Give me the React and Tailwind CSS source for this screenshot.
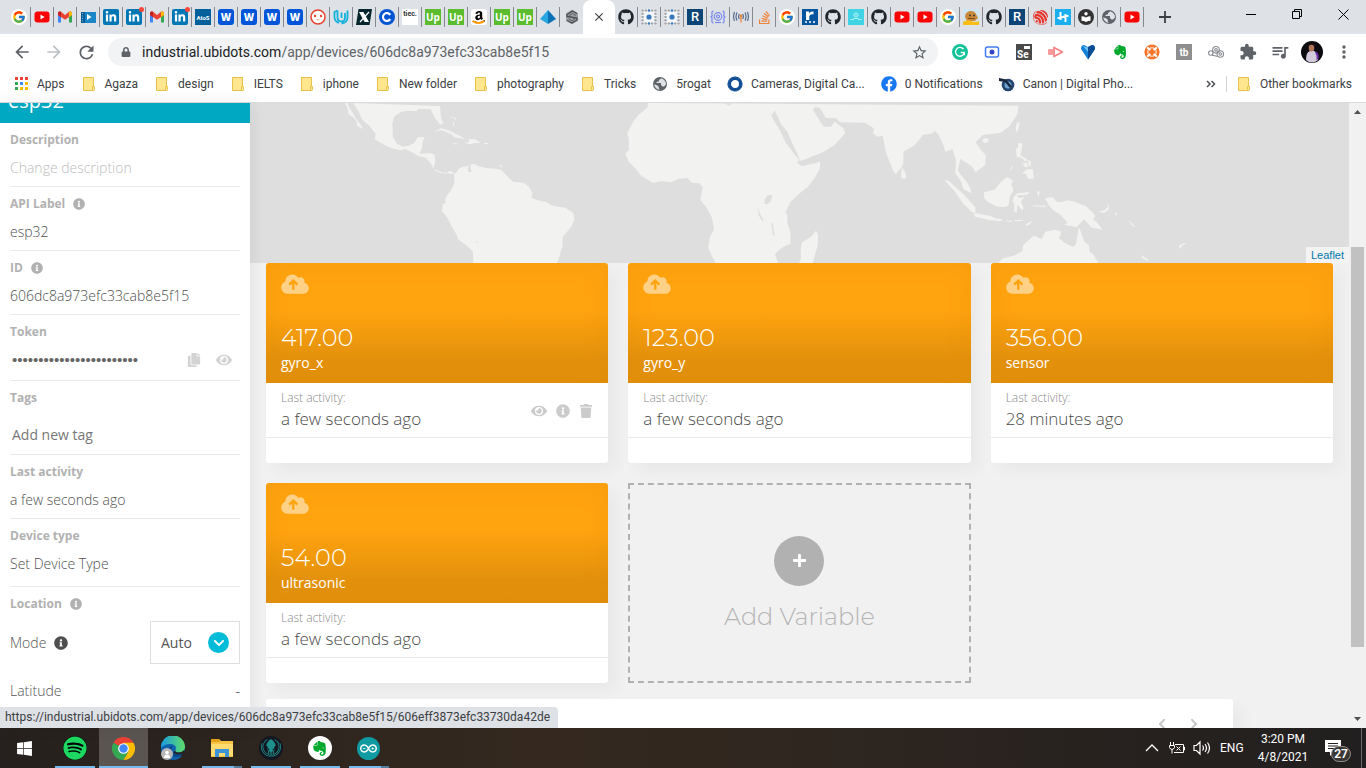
import React from "react";
import {
  FaInfoCircle, FaEye, FaCopy, FaTrash, FaPlus, FaChevronDown, FaChevronLeft, FaChevronRight,
  FaLinkedinIn, FaGithub, FaStackOverflow, FaAmazon, FaSpotify, FaFacebook, FaEvernote, FaLock,
  FaWindows,
} from "react-icons/fa";
import { FcGoogle } from "react-icons/fc";
import { SiEspressif, SiArduino, SiGitkraken } from "react-icons/si";
import { MdArrowBack, MdArrowForward, MdRefresh, MdStarBorder, MdQueueMusic, MdMoreVert, MdClose, MdExtension } from "react-icons/md";

/* ---------- tab icons ---------- */

const Google = () => (
  <span className="flex size-4 items-center justify-center rounded-full bg-white"><FcGoogle size={14} /></span>
);
const YouTube = () => (
  <svg viewBox="0 0 16 16" className="size-4">
    <rect x="0.5" y="2.5" width="15" height="11" rx="3" fill="#f00" />
    <path d="M6.5 5.6v4.8L10.6 8z" fill="#fff" />
  </svg>
);
const Gmail = () => (
  <svg viewBox="0 0 16 16" className="size-4">
    <path d="M1 4v9.5h3V7z" fill="#4285f4" />
    <path d="M15 4v9.5h-3V7z" fill="#34a853" />
    <path d="M1 4.2C1 2.5 3 2 4 2.8L8 6l4-3.200c1-.8 3-.3 3 1.400V6L8 10.800 1 6z" fill="#ea4335" />
    <path d="M12 2.800c1.200-.8 3-.2 3 1.500V6l-3 2.200z" fill="#fbbc04" />
    <path d="M1 4.200V6l3 2.200V2.800C2.800 2 1 2.600 1 4.200z" fill="#c5221f" />
  </svg>
);
const Video = () => (
  <svg viewBox="0 0 16 16" className="size-4">
    <rect x="1" y="3" width="15" height="11" fill="#1a86c7" />
    <path d="M1 3h4v11H1z" fill="#0b5a94" />
    <path d="M2 4.500h1.200M2 7h1.200M2 9.500h1.200M2 12h1.200" stroke="#7cc2ea" />
    <path d="M7 5v6l4.500-3z" fill="#fff" />
  </svg>
);
const LinkedIn = ({ dot }) => (
  <span className="relative flex size-4 items-center justify-center rounded-xs bg-[#0077b5] text-white">
    <FaLinkedinIn size={12} />
    {dot && <span className="absolute -top-0.5 -right-0.5 size-[5px] rounded-full bg-[#f5483b]" />}
  </span>
);
const Atos = () => (
  <span className="flex size-4 items-center justify-center bg-[#00609c] text-[6px] font-bold text-white">AtoS</span>
);
const Wuzzuf = () => (
  <span className="flex size-4 items-center justify-center rounded-[3px] bg-[#0055d9] font-['Open_Sans',sans-serif] text-[10px] font-extrabold text-white">W</span>
);
const Face = () => (
  <svg viewBox="0 0 16 16" className="size-4">
    <circle cx="8" cy="8" r="7" fill="#fff" stroke="#e8432d" strokeWidth="1.500" />
    <circle cx="5" cy="7" r="1.200" fill="#e8432d" /><circle cx="11" cy="7" r="1.200" fill="#e8432d" />
    <path d="M6.500 10.500q1.500 1 3 0" stroke="#f3a79c" fill="none" />
  </svg>
);
const Udacity = () => (
  <svg viewBox="0 0 16 16" className="size-4" fill="none" stroke="#12b2dd" strokeWidth="1.800">
    <path d="M4.500 1.500 1.500 3v5q0 4.500 4.500 6" />
    <path d="M4.500 1.500v7q0 4 4.500 4 3-.5 3-4V4" />
    <path d="M8.500 3.500V9M14.500 1.500v7q0 5-6 6" />
  </svg>
);
const XMark = () => (
  <svg viewBox="0 0 16 16" className="size-4">
    <path d="M2.500 0H16l-2.500 16H0z" fill="#06262d" />
    <path d="M4 3.500h3l5 9H9zM13 3 4 13" fill="#fff" stroke="#fff" strokeWidth="1.200" />
  </svg>
);
const Coursera = () => (
  <svg viewBox="0 0 16 16" className="size-4">
    <circle cx="8" cy="8" r="8" fill="#0056d2" />
    <path d="M11.300 5.800a4 4 0 1 0 0 4.400" stroke="#fff" strokeWidth="2.200" fill="none" />
  </svg>
);
const Tiec = () => (
  <span className="flex size-4 items-start justify-center bg-white pt-0.5 text-[7px] leading-[7px] font-bold text-[#333]">tiec.</span>
);
const Upwork = () => (
  <span className="flex size-4 items-center justify-center bg-[#5bbc2e] font-['Open_Sans',sans-serif] text-[10px] leading-3 font-bold text-white">Up</span>
);
const Amazon = () => (
  <span className="relative flex size-4 items-center justify-center rounded-[3px] bg-white text-black">
    <FaAmazon size={14} />
    <svg viewBox="0 0 16 16" className="absolute inset-0 size-4"><path d="M1.500 12q6 4 12 0" fill="none" stroke="#f90" strokeWidth="2" /></svg>
  </span>
);
const Pyramid = () => (
  <svg viewBox="0 0 16 16" className="size-4">
    <path d="M8 1 0 10l8 5z" fill="#29a7e0" /><path d="M8 1l8 9-8 5z" fill="#0c72b5" />
  </svg>
);
const Cubes = () => (
  <svg viewBox="0 0 16 16" className="size-4">
    <path d="M8 .8l6 3.500v7.400L8 15.200l-6-3.500V4.300z" fill="#9b9ea1" />
    <path d="M13 4.500 8.500 2 3 5.500v2L13 9v2l-5 3-5-2.500" fill="none" stroke="#4a4d50" strokeWidth="1.300" />
    <path d="M12 6.500 8.500 4.500 5 6.500l6 3.500-3 1.800-3.500-2" fill="none" stroke="#5b5e61" strokeWidth=".9" />
  </svg>
);
const GitHub = () => <FaGithub size={16} color="#20262c" />;
const grid = [1.500, 4.800, 8, 11.200, 14.500];
const Dots = () => (
  <svg viewBox="0 0 16 16" className="size-4">
    <rect width="16" height="16" fill="#f4f5f7" />
    {grid.map((x) => grid.map((y) => (x === 1.500 || x === 14.500 || y === 1.500 || y === 14.500) && (
      <circle key={`${x}-${y}`} cx={x} cy={y} r="1.300" fill={x === 8 ? "#3779bd" : "#a5a8ac"} />
    )))}
    <circle cx="8" cy="8" r="2.600" fill="#3779bd" />
  </svg>
);
const RBox = () => (
  <span className="flex size-4 items-center justify-center bg-[#0d4577] text-[13px] font-medium text-white">R</span>
);
const Json = () => (
  <svg viewBox="0 0 16 16" className="size-4" fill="none" stroke="#7486ec" strokeWidth="1.200">
    <path d="M3.500 2Q1.500 2 2 5t-1.500 3Q2.500 8 2 11t1.500 3M12.500 2q2 0 1.500 3t1.500 3Q13.500 8 14 11t-1.500 3" />
    <circle cx="8" cy="7.500" r="3.800" /><circle cx="8" cy="7.500" r="1.500" /><path d="M5 13.500h6" />
  </svg>
);
const Antenna = () => (
  <svg viewBox="0 0 16 16" className="size-4" fill="none" stroke="#4a6189" strokeWidth="1.100">
    <path d="M1.500 3q-1.800 4.500 0 9M4 3.500q-2 4 0 8M14.500 3q1.800 4.500 0 9M12 3.500q2 4 0 8M6.300 5q-1.300 2.500 0 5M9.700 5q1.300 2.500 0 5" />
    <path d="M8 8v5.500" stroke="#e7a06a" strokeWidth="1.800" /><circle cx="8" cy="7" r="1.400" fill="#e7832e" stroke="none" />
  </svg>
);
const Stack = () => <FaStackOverflow size={15} color="#ef8236" />;
const RDots = () => (
  <svg viewBox="0 0 16 16" className="size-4">
    <rect width="16" height="16" fill="#00559e" />
    <path d="M4 2.500h3v1.500q1.500-2 4.500-1.500v2.800q-3.500-.5-4.200 1.700V11H4z" fill="#fff" />
    <path d="M3 13h2M7 13h2M11 13h2" stroke="#fff" strokeWidth="1.500" />
  </svg>
);
const Cyan = () => (
  <svg viewBox="0 0 16 16" className="size-4">
    <rect width="16" height="16" fill="#3fd3e3" />
    <circle cx="8" cy="6" r="2.200" fill="#6fe0eb" stroke="#9deef5" /><path d="M2 10.500h4M10 10.500h4M5 9.500h6" stroke="#9deef5" />
  </svg>
);
const Dog = () => (
  <svg viewBox="0 0 16 16" className="size-4">
    <rect width="16" height="16" fill="#cfe6f2" />
    <path d="M2 8q0-5 5-6 5-.5 6.500 4L15 9l-3 3H4z" fill="#c98a3c" />
    <path d="M0 16v-3q4-3 8-1t8 0v4z" fill="#fbbc14" />
    <circle cx="7" cy="6.500" r=".9" fill="#333" /><circle cx="11" cy="6.500" r=".9" fill="#333" />
    <path d="M5 9.500h7" stroke="#7a4c17" />
  </svg>
);
const Espressif = () => <SiEspressif size={15} color="#e8362d" />;
const Hackster = () => (
  <svg viewBox="0 0 16 16" className="size-4">
    <rect width="16" height="16" fill="#1baff0" />
    <path d="M5.500 3v8M10.500 5v8M2.500 9h3l5-2h3" stroke="#fff" strokeWidth="1.900" fill="none" />
  </svg>
);
const Reader = () => (
  <svg viewBox="0 0 16 16" className="size-4">
    <circle cx="8" cy="8" r="8" fill="#333" />
    <circle cx="8" cy="4.800" r="1.700" fill="#fff" />
    <path d="M3.500 7.200Q6 7.200 8 8.500q2-1.300 4.500-1.300v4.500Q10 11.700 8 13q-2-1.300-4.500-1.300z" fill="#fff" />
  </svg>
);
const Globe = () => (
  <svg viewBox="0 0 16 16" className="size-4">
    <circle cx="8" cy="8" r="7" fill="#5f6368" />
    <path d="M9.500 2.300 7 4v1.500H5.500L4 7h5v2l1.500 1.500H12L14 8.500q.3-4-4.500-6.200zM2 8.200l3.500 1.300L6.800 11v1.500l1 1.300Q3.500 13.500 2 8.200z" fill="#dee1e6" />
  </svg>
);

const leftTabs = [
  Google, YouTube, Gmail, Video, LinkedIn, () => <LinkedIn dot />, Gmail, () => <LinkedIn dot />, Atos, Wuzzuf, Wuzzuf,
  Wuzzuf, Wuzzuf, Face, Udacity, XMark, Coursera, Tiec, Upwork, Upwork, Amazon, Upwork, Upwork, Pyramid, Cubes,
];
const rightTabs = [
  GitHub, Dots, Dots, RBox, Json, Antenna, Stack, Google, RDots, GitHub, Cyan, GitHub, YouTube, YouTube, Google, Dog,
  GitHub, RBox, Espressif, Hackster, Reader, Globe, YouTube,
];

function Tab({ icon: Icon, last }) {
  return (
    <button
      aria-label="Tab"
      className={"flex h-5 w-[23px] shrink-0 items-center justify-center " + (last ? "" : "border-r border-[#85888d]")}
    >
      <Icon />
    </button>
  );
}

function TabStrip() {
  return (
    <div className="flex h-[34px] items-center bg-[#dee1e6] pl-2">
      {leftTabs.map((t, i) => <Tab key={i} icon={t} last={i === leftTabs.length - 1} />)}
      <div className="flex h-full w-8 shrink-0 items-center justify-center rounded-t-lg bg-white">
        <button aria-label="Close tab" className="text-[#3c4043]"><MdClose size={14} /></button>
      </div>
      {rightTabs.map((t, i) => <Tab key={i} icon={t} />)}
      <button aria-label="New tab" className="ml-[13px] text-[#3c4043]">
        <svg viewBox="0 0 16 16" className="size-4"><path d="M8 2v12M2 8h12" stroke="currentColor" strokeWidth="1.800" /></svg>
      </button>
      <div className="ml-auto flex h-7 items-center self-start text-black">
        <button aria-label="Minimize" className="flex w-[46px] justify-center">
          <svg viewBox="0 0 11 11" className="size-[11px]"><path d="M0 5.500h10" stroke="currentColor" /></svg>
        </button>
        <button aria-label="Restore" className="flex w-[46px] justify-center">
          <svg viewBox="0 0 11 11" className="size-[11px]" fill="none" stroke="currentColor"><path d="M.5 2.500h7v7h-7zM2.500 2.500v-2h7v7h-2" /></svg>
        </button>
        <button aria-label="Close" className="flex w-[46px] justify-center">
          <svg viewBox="0 0 11 11" className="size-[11px]"><path d="M.5.500l10 10M10.500.500l-10 10" stroke="currentColor" /></svg>
        </button>
      </div>
    </div>
  );
}

/* ---------- toolbar ---------- */

const extensions = [
  ["Grammarly", <svg viewBox="0 0 16 16" className="size-4"><circle cx="8" cy="8" r="8" fill="#15c39a" /><path d="M11.500 5.200A4.400 4.400 0 1 0 12.300 8.500H8.800M12.300 8.500v2.800" fill="none" stroke="#fff" strokeWidth="1.300" /></svg>],
  ["Recorder", <svg viewBox="0 0 16 16" className="size-4"><rect x="1.500" y="3" width="13" height="10" rx="2" fill="#fff" stroke="#3f7cf4" strokeWidth="1.500" /><circle cx="8" cy="8" r="2.500" fill="#3246c8" /></svg>],
  ["Selenium", <span className="relative flex size-4 items-end bg-[#4a4a4a] pl-px text-[10px] leading-[11px] font-bold text-white">Se<span className="absolute top-0.5 right-0.5 h-[3px] w-1.5 bg-white" /></span>],
  ["Screencast", <svg viewBox="0 0 16 16" className="size-4"><rect x="0" y="5" width="5" height="6" rx="1" fill="#f79a9b" /><path d="M6 3.500v9L14.300 8z" fill="none" stroke="#f58385" strokeWidth="1.800" strokeLinejoin="round" /></svg>],
  ["Gem", <svg viewBox="0 0 16 16" className="size-4"><path d="M1 5q0-4 3-4l4 2 4-2q3 0 3 4L8 15.500z" fill="#1581d4" /><path d="M8 3l4-2q3 0 3 4L8 15.500z" fill="#0a4b94" /><path d="M3 2l5 1.500V8z" fill="#6cc3f7" /></svg>],
  ["Evernote", <FaEvernote size={16} color="#00a82d" />],
  ["Share", <svg viewBox="0 0 16 16" className="size-4"><circle cx="8" cy="8" r="7.600" fill="#f47527" /><circle cx="8" cy="8" r="4.200" fill="none" stroke="#fff" strokeWidth="1" /><path d="M4 4l1.500 1.500M12 4l-1.500 1.500M4 12l1.500-1.500M12 12l-1.500-1.500" stroke="#fff" strokeWidth="2.400" strokeLinecap="round" /></svg>],
  ["TubeBuddy", <span className="flex size-4 items-center justify-center bg-[#8e8e8e] text-[10px] font-bold text-white">tb</span>],
  ["Links", <svg viewBox="0 0 16 16" className="size-4" fill="none" stroke="#85898d" strokeWidth="1.100"><circle cx="2.800" cy="9" r="2.200" /><circle cx="8" cy="5.800" r="3.300" /><circle cx="12.300" cy="10" r="3.200" /><circle cx="8" cy="5.800" r="1.300" /><circle cx="12.300" cy="10" r="1.200" /><path d="M4 11l5.500 1.500" /></svg>],
  ["Extensions", <MdExtension size={18} color="#5f6368" />],
  ["Media controls", <MdQueueMusic size={20} color="#5f6368" />],
  ["Profile", <svg viewBox="0 0 22 22" className="size-[22px]"><circle cx="11" cy="11" r="11" fill="#0c0b10" /><path d="M5 19q0-8 4-9h4q4 1 4 9-6 5-12 0z" fill="#d3cbdc" /><ellipse cx="10.500" cy="7" rx="2.800" ry="3.500" fill="#b0765a" /><path d="M7 5.500q3.500-4 7 0l-.5-2.500h-5z" fill="#221714" /><path d="M14 11q2 3 1.500 8l2-1.500q1-4-2-6.500z" fill="#6d2dac" /></svg>],
  ["Menu", <MdMoreVert size={20} color="#5f6368" />],
];

function Toolbar() {
  return (
    <div className="flex h-9 items-center bg-white pl-1.5">
      <button aria-label="Back" className="flex w-8 justify-center text-[#5f6368]"><MdArrowBack size={20} /></button>
      <button aria-label="Forward" className="flex w-8 justify-center text-[#bdc0c4]"><MdArrowForward size={20} /></button>
      <button aria-label="Reload" className="flex w-8 justify-center text-[#5f6368]"><MdRefresh size={21} /></button>
      <div className="mr-1.5 ml-1.5 flex h-7 min-w-0 flex-1 items-center rounded-full bg-[#f1f3f4] pr-2.5 pl-[13px]">
        <FaLock size={10} color="#5f6368" />
        <div className="ml-[11px] flex-1 truncate text-[14px] text-[#5f6368]">
          <span className="text-[#202124]">industrial.ubidots.com</span>/app/devices/606dc8a973efc33cab8e5f15
        </div>
        <button aria-label="Bookmark this page" className="text-[#5f6368]"><MdStarBorder size={17} /></button>
      </div>
      {extensions.map(([name, icon]) => (
        <button key={name} aria-label={name} className="flex w-8 shrink-0 items-center justify-center">{icon}</button>
      ))}
      <span className="w-1.5 shrink-0" />
    </div>
  );
}

const Folder = () => (
  <svg viewBox="0 0 16 16" className="size-4">
    <path d="M2.500 1.500h10v13h-10z" fill="#ffe68f" stroke="#e8c24a" />
    <path d="M11.500 10.500h2v3q0 1-1 1t-1-1z" fill="#ffe68f" stroke="#e8c24a" />
  </svg>
);
const AppsIcon = () => (
  <svg viewBox="0 0 16 16" className="size-4">
    {["#ea4335", "#ea4335", "#ea4335", "#34a853", "#4285f4", "#fbbc04", "#34a853", "#fbbc04", "#fbbc04"].map((c, i) => (
      <rect key={i} x={2 + (i % 3) * 5} y={1 + Math.floor(i / 3) * 5} width="3" height="3" fill={c} />
    ))}
  </svg>
);
const Ring = () => (
  <svg viewBox="0 0 16 16" className="size-4"><circle cx="8" cy="8" r="5.800" fill="#fff" stroke="#134d93" strokeWidth="3.600" /><circle cx="8" cy="8" r="7" fill="none" stroke="#4f86bf" strokeWidth=".7" strokeDasharray="2 2" /></svg>
);
const CanonIcon = () => (
  <svg viewBox="0 0 16 16" className="size-4"><circle cx="9" cy="9" r="6.300" fill="#23456f" /><circle cx="9" cy="9" r="3.500" fill="#6fa3cf" /><path d="M0 2l7 1.500 6 7-2 1.500-5-6-6-1z" fill="#16273d" /></svg>
);

const bookmarks = [
  ["Apps", AppsIcon], ["Agaza", Folder], ["design", Folder], ["IELTS", Folder], ["iphone", Folder],
  ["New folder", Folder], ["photography", Folder], ["Tricks", Folder], ["5rogat", Globe],
  ["Cameras, Digital Ca...", Ring], ["0 Notifications", () => <FaFacebook size={16} color="#1877f2" />],
  ["Canon | Digital Pho...", CanonIcon],
];

function Bookmarks() {
  return (
    <div className="flex h-[33px] items-center overflow-hidden border-b border-[#d9dbdf] bg-white pb-1 pl-[13px] text-[12px] whitespace-nowrap text-[#3c4043]">
      <div className="flex items-center gap-4">
        {bookmarks.map(([label, Icon]) => (
          <a key={label} href="#" className="flex items-center gap-2"><Icon />{label}</a>
        ))}
      </div>
      <button aria-label="More bookmarks" className="mr-[10px] ml-auto">
        <svg viewBox="0 0 10 8" className="h-2 w-2.5" fill="none" stroke="#4c5054" strokeWidth="1.500"><path d="M1 1l3 3-3 3M5.500 1l3 3-3 3" /></svg>
      </button>
      <span className="h-4 border-l border-[#cfd1d5]" />
      <a href="#" className="mr-[14px] ml-[9px] flex items-center gap-2"><Folder />Other bookmarks</a>
    </div>
  );
}

/* ---------- sidebar ---------- */

function Label({ children, info, htmlFor }) {
  const text = htmlFor ? <label htmlFor={htmlFor}>{children}</label> : children;
  return (
    <div className="flex h-4 items-center gap-2 text-[12px] leading-4 font-bold text-[#b1b1b1]">
      {text}{info && <FaInfoCircle size={12} />}
    </div>
  );
}

function Field({ id, label, info, value, placeholder }) {
  return (
    <div className="border-b border-[#eaeaea] pt-[9px] pb-2">
      <Label info={info} htmlFor={id}>{label}</Label>
      <input id={id} defaultValue={value} placeholder={placeholder} className="mt-[10px] block h-5 w-full text-[14px] leading-5 font-light text-[#4f4f4f] outline-none placeholder:text-[#bdbdbd]" />
    </div>
  );
}

function Sidebar() {
  return (
    <aside className="z-10 w-[250px] shrink-0 overflow-hidden bg-white text-[14px] font-light text-[#555] shadow-[0_0_16px_rgba(0,0,0,0.08)]">
      <div className="flex h-5 items-end overflow-hidden bg-[#00a9c1] px-2 pb-2 text-[20px] leading-7 font-normal text-white">esp32</div>
      <div className="px-[10px]">
        <Field id="description" label="Description" placeholder="Change description" />
        <Field id="api-label" label="API Label" info value="esp32" />
        <Field id="device-id" label="ID" info value="606dc8a973efc33cab8e5f15" />
        <div className="border-b border-[#eaeaea] pt-[9px] pb-[10px]">
          <Label htmlFor="token">Token</Label>
          <div className="mt-[10px] flex h-5 items-center text-[#d3d3d3]">
            <input id="token" type="password" defaultValue="BBFFkq3Jm0Zt7dYp9sLw2XcV" className="min-w-0 flex-1 pl-0.5 font-['Liberation_Sans',sans-serif] text-[15px] leading-5 font-normal text-[#666] outline-none" />
            <button aria-label="Copy token" className="mr-[15px]"><FaCopy size={14} /></button>
            <button aria-label="Show token" className="mr-2"><FaEye size={16} /></button>
          </div>
        </div>
        <div className="border-b border-[#eaeaea] pt-[9px] pb-1.5">
          <Label htmlFor="tags">Tags</Label>
          <input id="tags" placeholder="Add new tag" className="mt-[14px] block h-7 w-full pl-0.5 text-[14px] font-normal outline-none placeholder:text-[#777]" />
        </div>
        <div className="border-b border-[#eaeaea] pt-[9px] pb-2">
          <Label>Last activity</Label>
          <div className="mt-[10px] leading-5 text-[#4f4f4f]">a few seconds ago</div>
        </div>
        <div className="border-b border-[#eaeaea] pt-[9px] pb-3">
          <Label>Device type</Label>
          <button className="mt-[10px] block leading-5 text-[#4f4f4f]">Set Device Type</button>
        </div>
        <div className="pt-[9px]">
          <Label info>Location</Label>
          <div className="mt-[9px] flex h-[43px] items-center">
            <label htmlFor="mode">Mode</label>
            <FaInfoCircle size={14} color="#4f4f4f" className="ml-2" />
            <div className="relative ml-auto h-full w-[90px]">
              <select id="mode" className="h-full w-full appearance-none border border-[#dedede] bg-white pl-[10px] text-[14px] font-normal text-[#555]">
                <option>Auto</option>
                <option>Manual</option>
              </select>
              <span className="pointer-events-none absolute inset-y-0 right-[11px] my-auto flex size-[21px] items-center justify-center rounded-full bg-[#00bcd9] text-white">
                <FaChevronDown size={12} />
              </span>
            </div>
          </div>
          <div className="mt-[17px] flex leading-5"><span className="flex-1">Latitude</span><span className="text-[#333]">-</span></div>
        </div>
      </div>
    </aside>
  );
}

/* ---------- main ---------- */

function WorldMap() {
  return (
    <div className="relative h-40 shrink-0 bg-[#dedede]">
      <svg viewBox="0 0 1099 160" preserveAspectRatio="xMinYMin slice" className="h-full w-full" fill="#f2f2f0">
        <g transform="translate(1 -3) scale(.35714 .33333)">
          <path d="M263 9l8 18 2 16 13 9 9 12 3 15 16 8-6-12-8-10-8-12-8-16-8-14-6-14z" />
          <path d="M286 9l16 26 10 25 20 18 17 24-2 16 26 17 21 10 24 6 14-4 24 13 12 8 22 5 12 16 8 13 12 10 14 5 8 5 11-9 11 4 3 10v24l-10 22-8 10-9 18 5 4-11 9-1 20 14 18 11 24 16 28 3 14 20 15 22 20 2 41h232l8-20 3-16 6-18 1-30 24-30 9-22-4-20-22-15-20-3-22-5-8-8-28-6-17-8 3-14-11-20-14-11-28-2-15-15-18-20-16-5-26-1-22-6-14-8-8 2-2 10 4 12-9 2-2-12 3-8-18 4-9 4-9 14-17 3-8-6-16 4-15-6-6-14 4-16-2-20-10-4-32 1 7-18 1-18 6-14-19 1-10 17-16 8-16 3-16-9-12-20-1-42 5-20 18-13 20-4 24 2 5-7 35 1 8 16 4 10 14 19 9-1-6-20-3-34z" />
          <path d="M512 95l20-10 22 6 20 12 12 5 14 9-30-5-10-10-26-11zM597 128l14-2-2-9 18 1 16 10-16 1-12 4zM564 129l14 1-4 4zM652 128l12 1v4l-11-1zM692 196l12 1-2 5zM560 51l14 2-1 10-3-8-10-2zM566 66l3 2-1 10-3-4z" />
          <path d="M1112 9l-2 14-25 22-15 20-17 35 5 15v35l-10 11 10 24 22 25 10 15 35 24 25-6 25 4 25-11 22-2 13 14 20 2 10 12-7 38 17 22 15 30 7 35-12 25-5 30 10 25 12 24h175l-10-28 8-9 16-14 20-9-1-36-9-28 1-22-6-8 15-32 30-30 17-13 20-27 15-30 1-20-36 10-17 3-12-10 5-9-15-20-23-33-14-33-20-35-14-34 10 22 8-15 18 40 18 25 8 20 8 20 14 30 5 18 22-9 45-20 30-20 30-35-5-15-25-20-10 15h-20l-10-15-20-35 5-10 15 5 15 28 30 2 10 12 70 1 25 17-2 15 12 10 15-3 8 48 22 60 7 8 20-28 1-40 32-20 22-30 28-5 5-8 10 11 15 32 5 20 20-7 10 32-2 40 17 25 5 22 23 13-3-15-10-20-20-25-5-10 7-33 13 8 20 15 10 17 27-22 1-30-13-15-15-23 20-22 50-7 25-20 22-35 3-26z" />
          <path d="M1568 410l-25 17-4 22 1 24-5 16h38l14-55 1-30-6-12z" />
          <path d="M1322 9h25l-7 8zM1438 300l8-14 14-1-5 20-10 8-7-2zM1420 316l4 24 12 22-4 1-11-18zM1457 370h4l5 38-5-4zM628 422l10 8-6-1zM1443 9l6 1-2 3z" fill="#dedede" />
        </g>
        <g transform="translate(556 -3) scale(.35714 .33333)">
          <path d="M268 202l8 12 6 16-6 7-10-4zM388 241l12 2 18 18 22 20 22 26 12 15v18l-10-4-25-26-24-38zM470 343l8-4 18 5 20 3 14 8 20 3-4 6-32-4-40-10zM498 277l30-8 15-20 20-18 16 10-4 14 6 16-10 18-4 28-14 5-20-3-22-12-12-12zM582 290l10-10 34-4-6 8-28 2 2 8 18-2-10 12 8 22-6 4-12-16-2 24-8-6 2-20-6-8zM648 272l6 4-2 14-4-6zM670 295l20-4 12 14 10 2 20-6 20 4 32 14 20 20 6 10-6 8 10 10 16 22-30-6-22-25-20 24-34-8 8-6-18-22-22-16-12-14zM590 70l8-4-3 20-5 14-3-16zM498 114l14 2-2 10-10 4-6-8zM594 128l12 3-2 18-4 16 14 10 8 6-8 3-12-11-12-2-2-24 6-6zM602 185l8 6 8-4 4 15-10-2zM622 180l8 4-1 16-6-4zM605 220l14-12 16 0 3 28-16 0-6-14zM582 192l-4 12-11 8 10-12zM560 361l18 2-4 3-14-3zM584 360l22-1 1 4-22 1zM615 372l20-10-10 12-8 3zM634 316l36 1 2 4-36-2zM818 335l18-4 12-12-10-10 12 8-4 14-12 8zM862 335l10 8-2 4zM904 360l18 20-4 1-12-14zM938 465l22 16-4 3-14-10zM1044 438l14-9h7l-12 8-6 10z" />
          <path d="M538 489l14-14 30-8 24-14 2-18 30-28 22 10 10-22 28-6 18 6-8 20 20 16 20 10 8-8 8-52 6 16 8 26 14 12 2 20 12 10 12 24h-280z" />
        </g>
      </svg>
      <a href="#" className="absolute right-0 bottom-0 bg-[#f3f3f3] px-[5px] font-['Liberation_Sans',sans-serif] text-[11px] leading-4 text-[#0078a8]">Leaflet</a>
    </div>
  );
}

const CloudUpload = () => (
  <svg viewBox="0 0 640 512" className="h-[22px] w-7">
    <path d="M537.6 226.600c4.100-10.700 6.400-22.400 6.400-34.600 0-53-43-96-96-96-19.700 0-38.100 6-53.300 16.200C367 64.200 315.300 32 256 32c-88.400 0-160 71.600-160 160 0 2.700.1 5.400.2 8.100C40.200 219.800 0 273.200 0 336c0 79.500 64.500 144 144 144h368c70.700 0 128-57.300 128-128 0-61.900-44-113.600-102.400-125.400z" fill="#fff" fillOpacity=".5" />
    <path d="M280 392V180M184 272l96-96 96 96" fill="none" stroke="#ffa30f" strokeWidth="54" />
  </svg>
);

function VariableCard({ value, name, activity, actions }) {
  return (
    <article className="overflow-hidden rounded-[3px] bg-white shadow-[8px_8px_16px_rgba(0,0,0,0.04)]">
      <div className="flex h-[120px] flex-col justify-between bg-linear-to-b from-[#ffa30f] from-40% to-[#e3910c] to-80% px-[15px] py-[10px] text-white shadow-[inset_0_0_24px_rgba(200,120,0,0.15)]">
        <CloudUpload />
        <div>
          <div className="font-[Montserrat,Inter,sans-serif] text-[24px] leading-[30px] font-light">{value}</div>
          <div className="text-[14px] leading-5">{name}</div>
        </div>
      </div>
      <div className="flex items-center border-b border-[#eaeaea] px-[15px] pt-[7px] pb-[6px] font-light">
        <div className="flex-1">
          <div className="text-[12px] leading-4 text-[#8a8a8a]">Last activity:</div>
          <div className="text-[17px] leading-[25px] text-[#4a4a4a]">{activity}</div>
        </div>
        {actions && (
          <div className="flex items-center gap-[9px] pt-px text-[#cbcbcb]">
            <button aria-label="View"><FaEye size={16} /></button>
            <button aria-label="Information"><FaInfoCircle size={14} /></button>
            <button aria-label="Delete"><FaTrash size={14} /></button>
          </div>
        )}
      </div>
      <div className="h-[25px]" />
    </article>
  );
}

const variables = [
  { value: "417.00", name: "gyro_x", activity: "a few seconds ago", actions: true },
  { value: "123.00", name: "gyro_y", activity: "a few seconds ago" },
  { value: "356.00", name: "sensor", activity: "28 minutes ago" },
  { value: "54.00", name: "ultrasonic", activity: "a few seconds ago" },
];

function Main() {
  return (
    <main className="flex min-w-0 flex-1 flex-col overflow-hidden bg-[#f1f1f1]">
      <WorldMap />
      <div className="grid shrink-0 grid-cols-3 gap-5 px-4">
        {variables.map((v) => <VariableCard key={v.name} {...v} />)}
        <button className="flex flex-col items-center justify-center border-2 border-dashed border-[#b1b1b1] pt-1 text-[#b5b5b5]">
          <span className="flex size-[50px] items-center justify-center rounded-full bg-[#b1b1b1] text-white"><FaPlus size={15} /></span>
          <span className="mt-[13px] font-[Montserrat,Inter,sans-serif] text-[24px] leading-9 font-light">Add Variable</span>
        </button>
      </div>
      <div className="mt-4 mr-[116px] ml-4 flex flex-1 justify-end gap-5 rounded-t-[3px] bg-white pt-[19px] pr-[33px] text-[#c4c4c4] shadow-[8px_8px_16px_rgba(0,0,0,0.04)]">
        <button aria-label="Previous page" className="h-3"><FaChevronLeft size={12} /></button>
        <button aria-label="Next page" className="h-3"><FaChevronRight size={12} /></button>
      </div>
    </main>
  );
}

function Scrollbar() {
  return (
    <div className="flex w-[17px] shrink-0 flex-col items-center bg-[#f1f1f1]">
      <svg viewBox="0 0 17 17" className="size-[17px]"><path d="M5 11h7L8.500 7z" fill="#505050" /></svg>
      <div className="flex w-[13px] flex-1 flex-col">
        <div className="flex-[127]" />
        <div className="flex-[400] bg-[#c1c1c1]" />
        <div className="flex-[64]" />
      </div>
      <svg viewBox="0 0 17 17" className="size-[17px]"><path d="M5 6h7l-3.500 4z" fill="#505050" /></svg>
    </div>
  );
}

/* ---------- taskbar ---------- */

const Chrome = () => (
  <svg viewBox="0 0 24 24" className="size-[23px]">
    <path d="M12 12 1.600 6A12 12 0 0 1 22.400 6z" fill="#ea4335" />
    <path d="M12 12 1.600 6A12 12 0 0 0 12 24l5.200-9z" fill="#34a853" />
    <path d="M12 12V6h10.400A12 12 0 0 1 12 24l5.200-9z" fill="#fbbc04" />
    <circle cx="12" cy="12" r="5.600" fill="#fff" /><circle cx="12" cy="12" r="4.400" fill="#4285f4" />
  </svg>
);
const EdgeIcon = () => (
  <span className="relative">
    <svg viewBox="0 0 24 24" className="size-6">
      <defs><linearGradient id="edge"><stop stopColor="#1b9de2" /><stop offset="1" stopColor="#5fdc68" /></linearGradient></defs>
      <circle cx="12" cy="12" r="12" fill="#0f62ae" />
      <path d="M0 12A12 12 0 0 1 24 10.500c0 4-3 6-6.500 6-2.500 0-4-1-3-2.500C16 11 14 8 9.500 8 5 8 1 10 0 12z" fill="url(#edge)" />
      <path d="M14.500 14c-1 1.500.5 2.500 3 2.500 2.500 0 4.500-1 5.800-2.800L24 18l-3 2q-7 1-8.500-4z" fill="#26211f" />
      <path d="M8 12q-1 8 7 9 4 0 7-3.500-7 2-10.500-1.500-2-2.500 0-6-3 0-3.500 2z" fill="#0b4685" />
    </svg>
    <span className="absolute bottom-0 left-0 flex size-3 items-center justify-center rounded-full bg-[#b8b8b8]">
      <svg viewBox="0 0 10 10" className="size-2.5"><circle cx="5" cy="3.500" r="1.800" fill="#fff" /><path d="M2 9q0-3.500 3-3.500T8 9z" fill="#fff" /></svg>
    </span>
  </span>
);
const Explorer = () => (
  <svg viewBox="0 0 24 20" className="h-5 w-6">
    <path d="M1 1h8l2 2h12v16H1z" fill="#f8c545" /><path d="M1 1h8l1 3H1z" fill="#e4a11b" />
    <path d="M1 6h22v12H1z" fill="#ffdb70" /><path d="M5 19v-8h14v8h-4v-4H9v4z" fill="#3d95d8" />
  </svg>
);
const taskItems = [
  ["Spotify", <span className="rounded-full bg-black"><FaSpotify size={24} color="#1ed760" /></span>, "one"],
  ["Chrome", <Chrome />, "active"],
  ["Edge", <EdgeIcon />, ""],
  ["File Explorer", <Explorer />, "many"],
  ["GitKraken", <span className="flex size-6 items-center justify-center rounded-full bg-[#131722]"><SiGitkraken size={20} color="#1f8f8b" /></span>, "one"],
  ["Evernote", <span className="flex size-6 items-center justify-center rounded-full bg-white"><FaEvernote size={17} color="#00a82d" /></span>, "one"],
  ["Arduino", <span className="flex size-[23px] items-center justify-center rounded-full bg-[#0f9ba1]"><SiArduino size={17} color="#fff" /></span>, "many"],
];

function Taskbar() {
  return (
    <footer className="flex h-10 shrink-0 items-stretch bg-linear-to-r from-[#26211e] via-[#35291f] via-40% to-[#211f1f] text-white">
      <button aria-label="Start" className="flex w-[50px] items-center justify-center pr-0.5"><FaWindows size={17} /></button>
      {taskItems.map(([name, icon, state]) => (
        <button key={name} aria-label={name} className={"flex w-[49px] flex-col items-center " + (state === "active" ? "bg-[#5b5551]" : "")}>
          <span className="flex flex-1 items-center pt-0.5">{icon}</span>
          <span className={"flex h-0.5 justify-end " + (state === "active" ? "w-full bg-[#76b9ed]" : state ? "w-10 bg-[#76b9ed]" : "")}>
            {state === "many" && <span className="w-2 bg-[#527d9f]" />}
          </span>
        </button>
      ))}
      <div className="ml-auto flex items-center font-[Roboto,sans-serif] text-[12px]">
        <button aria-label="Show hidden icons" className="mr-[10px]">
          <svg viewBox="0 0 14 8" className="h-2 w-3.5" fill="none" stroke="#fff" strokeWidth="1.300"><path d="M1 7l6-6 6 6" /></svg>
        </button>
        <svg viewBox="0 0 16 14" className="mr-2 h-3.5 w-4" fill="none" stroke="#fff">
          <path d="M1.500 1v3M4.500 1v3M.5 4.500h5v2q-1 2-2.500 2t-2.500-2zM3 8.500v4M6 3.500h8.500v8H5M14.500 6h1v3h-1" />
          <path d="M7.500 5.500l4 4M11.500 5.500l-4 4" />
        </svg>
        <svg viewBox="0 0 18 16" className="mr-[9px] h-4 w-[18px]" fill="none" stroke="#fff" strokeWidth="1.200">
          <path d="M1 5.500h2.500L7 2v12l-3.500-3.500H1zM9.500 5.500q2 2.500 0 5M12 4q3 4 0 8M14.500 2.500q4 5.500 0 11" />
        </svg>
        <span className="w-[25px]">ENG</span>
        <div className="ml-[10px] w-14 text-center leading-[18px] whitespace-nowrap"><div>3:20 PM</div><div>4/8/2021</div></div>
        <button aria-label="27 new notifications" className="relative ml-[14px] h-7 w-7">
          <svg viewBox="0 0 16 16" className="size-4"><path d="M0 0h16v12H9l-4 4v-4H0z" fill="#fff" /><path d="M3 3.500h10M3 6h10M3 8.500h6" stroke="#25211f" /></svg>
          <span className="absolute right-0.5 bottom-0 flex h-4 w-5 items-center justify-center rounded-full border border-[#8c8986] bg-[#3a3735] text-[12px] leading-3 font-semibold">27</span>
        </button>
        <span className="ml-2 h-10 w-[5px] border-l border-[#6d6967]" />
      </div>
    </footer>
  );
}

export default function App() {
  return (
    <div className="flex h-screen flex-col overflow-hidden bg-white font-['Open_Sans','Noto_Sans',sans-serif]">
      <header className="shrink-0 font-[Roboto,'Noto_Sans',sans-serif]">
        <TabStrip />
        <Toolbar />
        <Bookmarks />
      </header>
      <div className="relative flex min-h-0 flex-1">
        <Sidebar />
        <Main />
        <Scrollbar />
        <div className="absolute bottom-0 left-0 z-20 rounded-tr bg-[#dee1e6] pr-2 pl-[5px] font-[Roboto,'Noto_Sans',sans-serif] text-[12px] leading-[21px] text-[#3c4043]">
          https://industrial.ubidots.com/app/devices/606dc8a973efc33cab8e5f15/606eff3873efc33730da42de
        </div>
      </div>
      <Taskbar />
    </div>
  );
}
